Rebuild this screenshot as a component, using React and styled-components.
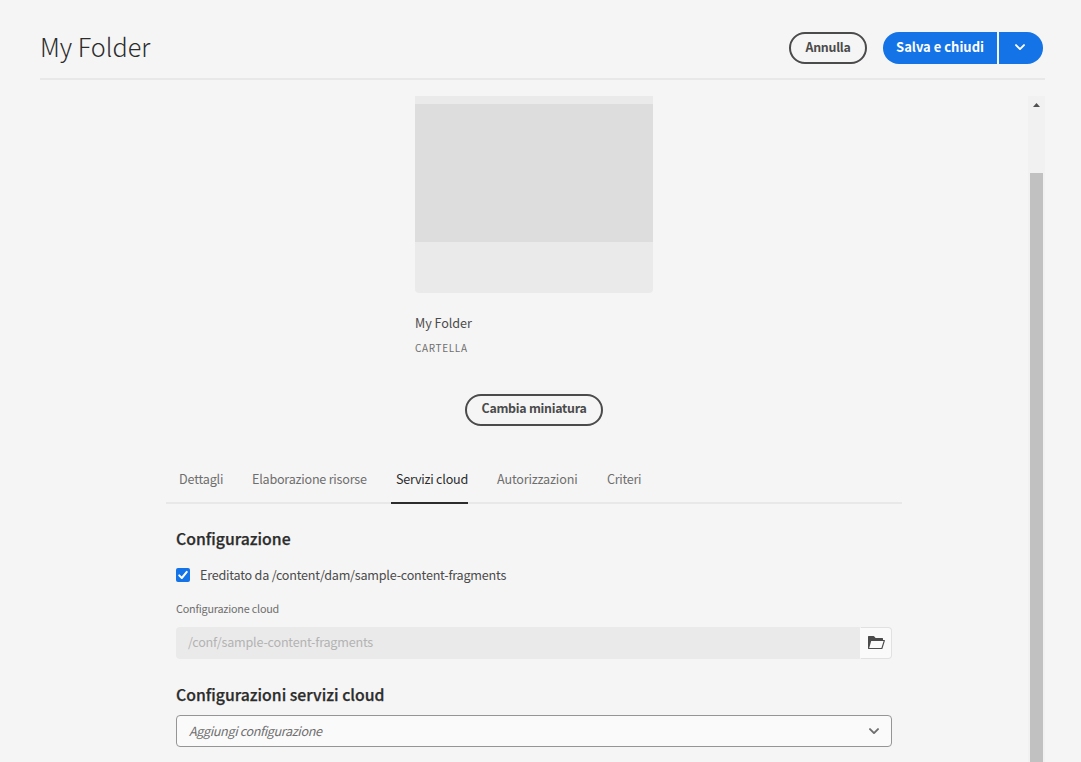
import React from "react";
import styled, { createGlobalStyle } from "styled-components";

const GlobalStyle = createGlobalStyle`
  * { box-sizing: border-box; }
  html, body { margin: 0; padding: 0; }
  body {
    background: #f5f5f5;
    color: #4b4b4b;
    font-family: "Noto Sans CJK SC", "Noto Sans", sans-serif;
    font-size: 12.6px;
    overflow: hidden;
  }
  button, input { font: inherit; }
`;

const Page = styled.div`
  height: 762px;
  padding: 0 36px 0 40px;
  display: flex;
  flex-direction: column;
  overflow: hidden;
`;

const Header = styled.header`
  height: 80px;
  flex: none;
  display: flex;
  align-items: flex-start;
  padding: 32px 2px 0 0;
  border-bottom: 2px solid #e8e8e8;
`;

const Title = styled.h1`
  margin: 0;
  flex: 1;
  font-size: 25.2px;
  font-weight: 300;
  line-height: 28px;
  color: #2c2c2c;
`;

const OutlineButton = styled.button`
  width: ${(p) => p.$width}px;
  height: 32px;
  padding: 0 0 ${(p) => p.$lift || 2}px;
  border: 2px solid #4b4b4b;
  border-radius: 16px;
  background: transparent;
  color: #4b4b4b;
  font-size: 12.4px;
  font-weight: 700;
  line-height: 20px;
  white-space: nowrap;
  letter-spacing: -0.27px;
`;

const SplitButton = styled.div`
  display: flex;
  gap: 2px;
  margin-left: 16px;
`;

const PrimaryButton = styled.button`
  width: 114px;
  height: 32px;
  padding: 0 0 2px;
  border: 0;
  border-radius: 16px 0 0 16px;
  background: #1473e6;
  color: #fff;
  font-size: 13px;
  font-weight: 700;
  line-height: 20px;
  white-space: nowrap;
`;

const MenuButton = styled(PrimaryButton)`
  width: 44px;
  border-radius: 0 16px 16px 0;
  display: flex;
  align-items: center;
  justify-content: center;
  padding: 0 2px 1px 0;
`;

const ScrollArea = styled.main`
  flex: 1;
  min-height: 0;
  margin-top: 16px;
  display: flex;
`;

const Content = styled.div`
  flex: 1;
  display: flex;
  flex-direction: column;
  align-items: center;
  overflow: hidden;
`;

const ScrollTrack = styled.div`
  width: 17px;
  background: #f1f1f1;
  display: flex;
  flex-direction: column;
  align-items: center;
`;

const ScrollArrow = styled.svg`
  display: block;
  width: 17px;
  height: 17px;
  flex: none;
`;

const ScrollThumb = styled.div`
  width: 13px;
  flex: 1;
  margin-top: 60px;
  background: #c1c1c1;
`;

const Card = styled.section`
  width: 238px;
  display: flex;
  flex-direction: column;
`;

const Thumbnail = styled.div`
  height: 197px;
  padding: 8px 0 51px;
  background: #eaeaea;
  border-radius: 0 0 4px 4px;
`;

const ThumbnailImage = styled.div`
  height: 138px;
  background: #dddddd;
`;

const CardTitle = styled.div`
  margin-top: 20px;
  line-height: 20px;
  letter-spacing: -0.05px;
`;

const CardType = styled.div`
  margin-top: 6px;
  margin-bottom: 38px;
  font-size: 10px;
  line-height: 17px;
  color: #6e6e6e;
  letter-spacing: 0.65px;
`;

const Panel = styled.section`
  width: 736px;
  display: flex;
  flex-direction: column;
`;

const TabList = styled.nav`
  height: 48px;
  margin-top: 30px;
  padding-left: 8px;
  display: flex;
  border-bottom: 2px solid #e8e8e8;
`;

const Tab = styled.a`
  height: 48px;
  width: ${(p) => p.$width}px;
  margin-right: 24px;
  padding: 13px 0 0 5px;
  line-height: 20px;
  white-space: nowrap;
  color: ${(p) => (p.$active ? "#2c2c2c" : "#6e6e6e")};
  border-bottom: 2px solid ${(p) => (p.$active ? "#2c2c2c" : "transparent")};
  letter-spacing: ${(p) => p.$spacing}px;
`;

const Form = styled.form`
  padding: 0 10px;
  display: flex;
  flex-direction: column;
`;

const Heading = styled.h2`
  margin: ${(p) => p.$top}px 0 0;
  font-size: 15.8px;
  font-weight: 500;
  line-height: 24px;
  color: #2c2c2c;
  -webkit-text-stroke: 0.25px #2c2c2c;
`;

const CheckboxRow = styled.label`
  margin-top: 14px;
  height: 20px;
  display: flex;
  align-items: center;
  gap: 10px;
  line-height: 20px;
  letter-spacing: -0.22px;
`;

const Checkbox = styled.span`
  width: 14px;
  height: 14px;
  border-radius: 2px;
  background: #1473e6;
  display: flex;
`;

const FieldLabel = styled.label`
  margin-top: 14px;
  font-size: 10.8px;
  line-height: 18px;
  color: #6e6e6e;
  letter-spacing: -0.2px;
`;

const PathField = styled.div`
  margin-top: 10px;
  height: 32px;
  display: flex;
`;

const PathValue = styled.div`
  flex: 1;
  padding: 5px 12px;
  border-radius: 4px 0 0 4px;
  background: #eaeaea;
  color: #b3b3b3;
  line-height: 20px;
  letter-spacing: -0.21px;
`;

const BrowseButton = styled.button`
  width: 32px;
  height: 32px;
  padding: 0;
  border: 1px solid #e1e1e1;
  border-left-color: #fafafa;
  border-radius: 0 4px 4px 0;
  background: #fafafa;
  display: flex;
`;

const Select = styled.div`
  margin-top: 8px;
  height: 32px;
  padding: 0 12px;
  display: flex;
  align-items: center;
  justify-content: space-between;
  border: 1px solid #959595;
  border-radius: 4px;
  background: #fafafa;
  color: #6e6e6e;
`;

const Placeholder = styled.span`
  font-style: italic;
  line-height: 20px;
  letter-spacing: -0.37px;
`;

const Chevron = ({ color }) => (
  <svg width="10" height="7" viewBox="0 0 10 7" fill="none">
    <path d="M1 1.1 5 5.1 9 1.1" stroke={color} strokeWidth="1.9" strokeLinecap="round" strokeLinejoin="round" />
  </svg>
);

const FolderOpenIcon = () => (
  <svg width="30" height="30" viewBox="0 0 30 30">
    <path
      fill="#4b4b4b"
      fillRule="evenodd"
      d="M7 20.6V8.6q0-.6.6-.6h4.8q.4 0 .7.3L14.6 10h6.8q.6 0 .6.6V12h1.4q.7 0 .5.7l-2.4 7.8q-.2.5-.7.5H7.4q-.4 0-.4-.4ZM10.2 13 8.2 20H20.4l2.2-7Z"
    />
  </svg>
);

const TABS = [
  { label: "Dettagli", width: 49, spacing: -0.17 },
  { label: "Elaborazione risorse", width: 120, spacing: -0.23 },
  { label: "Servizi cloud", width: 77, spacing: -0.24 },
  { label: "Autorizzazioni", width: 86, spacing: -0.16 },
  { label: "Criteri", width: 39, spacing: -0.3 },
];

const ACTIVE_TAB = "Servizi cloud";

export default function App() {
  return (
    <>
      <GlobalStyle />
      <Page>
        <Header>
          <Title>My Folder</Title>
          <OutlineButton $width={78}>Annulla</OutlineButton>
          <SplitButton>
            <PrimaryButton>Salva e chiudi</PrimaryButton>
            <MenuButton aria-label="Altre azioni">
              <Chevron color="#fff" />
            </MenuButton>
          </SplitButton>
        </Header>
        <ScrollArea>
          <Content>
            <Card>
              <Thumbnail>
                <ThumbnailImage />
              </Thumbnail>
              <CardTitle>My Folder</CardTitle>
              <CardType>CARTELLA</CardType>
            </Card>
            <OutlineButton $width={138} $lift={4}>Cambia miniatura</OutlineButton>
            <Panel>
              <TabList>
                {TABS.map((tab) => (
                  <Tab key={tab.label} $width={tab.width} $active={tab.label === ACTIVE_TAB} $spacing={tab.spacing}>
                    {tab.label}
                  </Tab>
                ))}
              </TabList>
              <Form>
                <Heading $top={23}>Configurazione</Heading>
                <CheckboxRow>
                  <Checkbox>
                    <svg width="14" height="14" viewBox="0 0 14 14" fill="none">
                      <path d="M3.2 7.4 5.8 10 10.8 3.9" stroke="#fff" strokeWidth="2" strokeLinecap="round" strokeLinejoin="round" />
                    </svg>
                  </Checkbox>
                  Ereditato da /content/dam/sample-content-fragments
                </CheckboxRow>
                <FieldLabel>Configurazione cloud</FieldLabel>
                <PathField>
                  <PathValue>/conf/sample-content-fragments</PathValue>
                  <BrowseButton type="button" aria-label="Sfoglia">
                    <FolderOpenIcon />
                  </BrowseButton>
                </PathField>
                <Heading $top={24}>Configurazioni servizi cloud</Heading>
                <Select>
                  <Placeholder>Aggiungi configurazione</Placeholder>
                  <Chevron color="#6e6e6e" />
                </Select>
              </Form>
            </Panel>
          </Content>
          <ScrollTrack>
            <ScrollArrow viewBox="0 0 17 17">
              <path d="M5 11 8.5 7 12 11Z" fill="#505050" />
            </ScrollArrow>
            <ScrollThumb />
          </ScrollTrack>
        </ScrollArea>
      </Page>
    </>
  );
}
